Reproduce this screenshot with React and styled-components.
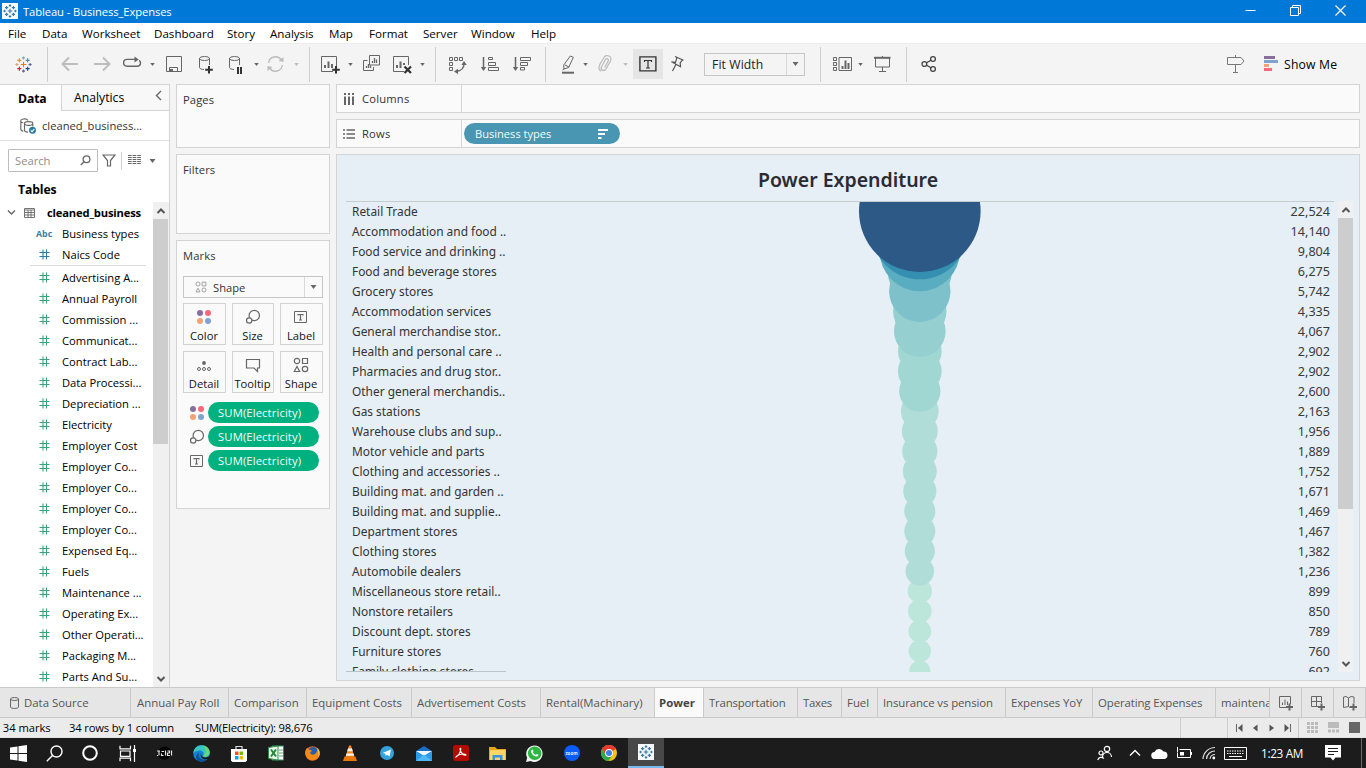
import React from "react";
import styled, { createGlobalStyle, css } from "styled-components";

const Global = createGlobalStyle`
  *, *::before, *::after { box-sizing: border-box; }
  html, body { margin: 0; padding: 0; }
  body {
    width: 1366px; height: 768px; overflow: hidden; background: #f4f4f4;
    font-family: "Open Sans", "Noto Sans", sans-serif; font-size: 11.2px; color: #000;
  }
  svg { display: block; flex: none; }
`;

const line = "#d4d4d4";

/* ---------- frame ---------- */
const Window = styled.div`
  width: 1366px; height: 768px; display: flex; flex-direction: column; overflow: hidden; white-space: nowrap;
`;
const TitleBar = styled.header`
  height: 23px; flex: none; background: #0078d7; color: #fff; display: flex; align-items: center; padding-left: 2px;
`;
const AppBadge = styled.span`
  width: 16px; height: 16px; background: #f7fafc; display: flex; align-items: center; justify-content: center; margin-top: -2px;
`;
const TitleText = styled.span`margin-left: 5px; font-size: 11.2px; letter-spacing: -0.08px;`;
const WindowButtons = styled.div`
  margin-left: auto; display: flex; align-items: center; padding-right: 20px; gap: 34px; margin-top: -3px;
`;
const MenuBar = styled.nav`
  height: 20px; flex: none; background: #fff; display: flex; align-items: center; padding: 1px 0 0 8px;
`;
const MenuItem = styled.span`
  flex: none; width: ${(p) => p.$w}px; font-size: 11.6px;
`;

/* ---------- toolbar ---------- */
const Toolbar = styled.div`
  height: 41px; flex: none; display: flex; align-items: center; border-top: 1px solid #ececec; background: #f4f4f4;
`;
const Slot = styled.span`display: flex; flex: none; margin-left: ${(p) => p.$l}px;`;
const Divider = styled.span`
  width: 1px; height: 35px; flex: none; background: #cfcfcf; margin-left: ${(p) => p.$l}px;
`;
const Toggled = styled.span`
  width: 30px; height: 30px; flex: none; margin-left: 5px; background: #e5e5e5; display: flex; align-items: center; justify-content: center;
`;
const FitSelect = styled.span`
  width: 101px; height: 23px; flex: none; margin-left: 17px; border: 1px solid #c6c6c6; display: flex; align-items: center;
  padding-left: 7px; font-size: 12.2px; color: #222; letter-spacing: 0.1px;
`;
const SelectArrow = styled.span`
  margin-left: auto; width: 18px; height: 100%; border-left: 1px solid #dadada; display: flex; align-items: center; justify-content: center;
`;
const ToolbarEnd = styled.div`margin-left: auto; padding-right: 28px; display: flex; align-items: center;`;
const ShowMe = styled.span`margin-left: 6px; font-size: 12.2px; width: 54px; letter-spacing: 0.2px;`;

/* ---------- work area ---------- */
const Work = styled.main`height: 603px; flex: none; display: flex;`;
const DataPane = styled.aside`
  width: 170px; flex: none; background: #fff; border-right: 1px solid ${line}; border-top: 1px solid ${line}; display: flex; flex-direction: column;
`;
const PaneTabs = styled.div`display: flex; height: 26px; flex: none;`;
const DataTab = styled.div`
  width: 61px; padding: 5px 0 0 18px; font-weight: 700; font-size: 12.2px; letter-spacing: -0.1px;
`;
const AnalyticsTab = styled.div`
  flex: 1; background: #f8f8f8; border-left: 1px solid ${line}; border-bottom: 1px solid ${line};
  padding: 5px 7px 0 12px; font-size: 12.2px; line-height: 16px; display: flex; justify-content: space-between;
  svg { margin-top: -1px; }
`;
const SourceRow = styled.div`
  height: 30px; flex: none; border-bottom: 1px solid #e0e0e0; display: flex; align-items: center; padding-left: 20px; gap: 6px; color: #333;
`;
const SearchRow = styled.div`display: flex; align-items: center; height: 23px; flex: none; margin: 8px 0 0 8px;`;
const SearchBox = styled.div`
  width: 90px; height: 23px; border: 1px solid #bdbdbd; border-radius: 1px; color: #8d8d8d; display: flex; align-items: center; justify-content: space-between;
  padding: 0 6px;
`;
const ThinRule = styled.i`width: 1px; height: 18px; background: #d0d0d0; margin: 0 6px 0 5px;`;
const TablesTitle = styled.div`
  height: 30px; flex: none; font-weight: 700; font-size: 12.2px; padding: 9px 0 0 18px; letter-spacing: -0.1px;
`;
const Tree = styled.div`flex: 1; min-height: 0; display: flex; justify-content: space-between;`;
const Fields = styled.div`width: 153px; overflow: hidden;`;
const TableRow = styled.div`
  height: 21px; display: flex; align-items: center; font-weight: 700; padding-left: 7px; font-size: 11.2px; letter-spacing: -0.17px;
  span { margin-left: 12px; }
  svg + svg { margin-left: 8px; }
`;
const FieldRow = styled.div`
  height: 21px; display: flex; align-items: center; font-size: 11.2px;
`;
const FieldKind = styled.span`
  width: 62px; padding-left: ${(p) => (p.$abc ? 36 : 38.5)}px; color: #3b7ea1; font-weight: 700; font-size: 8.8px;
`;
const FieldRule = styled.hr`height: 1px; border: 0; background: #dcdcdc; margin: 0 7px 1px 30px;`;

const Scroll = styled.div`
  width: ${(p) => p.$w || 16}px; background: #f0f0f0; display: flex; flex-direction: column; align-items: flex-start; flex: none;
`;
const ScrollEnd = styled.span`height: 17px; width: 15px; display: flex; align-items: center; justify-content: center;`;
const Thumb = styled.span`height: ${(p) => p.$h}px; width: 15px; background: #cdcdcd; margin-bottom: auto;`;

/* ---------- cards ---------- */
const Cards = styled.section`width: 154px; margin-left: 6px; flex: none; display: flex; flex-direction: column; gap: 6px;`;
const Card = styled.div`
  height: ${(p) => p.$h}px; border: 1px solid ${line}; background: #fafafa; padding: 7px 6px; color: #333; font-size: 11.2px; letter-spacing: 0.1px;
`;
const MarkType = styled.div`
  height: 22px; width: 140px; margin: 13px 0 5px; border: 1px solid #c6c6c6; display: flex; align-items: center; padding-left: 11px; letter-spacing: 0;
  svg + span { margin-left: 6px; }
`;
const MarkGrid = styled.div`display: grid; grid-template-columns: 43px 42px 43px; column-gap: 6px; row-gap: 6px;`;
const MarkButton = styled.div`
  height: 42px; border: 1px solid #d2d2d2; display: flex; flex-direction: column; align-items: center; color: #111;
  padding: 3px 1px 0 0; line-height: 16px; letter-spacing: 0;
  svg { margin-bottom: 1px; }
`;
const Pills = styled.div`margin-top: 9px; display: grid; row-gap: 3px;`;
const PillRow = styled.div`display: flex; align-items: center; padding-left: 6px; gap: 3px;`;
const Pill = styled.span`
  height: 21px; border-radius: 11px; display: flex; align-items: center; color: #f3fbf8;
  ${(p) => p.$blue
    ? css`background: #4996b2; width: 156px; justify-content: space-between; padding: 0 12px 0 11px; font-size: 11.1px;`
    : css`background: #00b180; width: 111px; padding: 0 10px; font-size: 11.3px;`}
`;

/* ---------- shelves and view ---------- */
const Canvas = styled.section`width: 1024px; margin-left: 6px; flex: none; display: flex; flex-direction: column; gap: 6px;`;
const Shelf = styled.div`height: 29px; flex: none; border: 1px solid ${line}; background: #fafafa; display: flex;`;
const ShelfName = styled.div`
  width: 125px; border-right: 1px solid ${line}; display: flex; align-items: center; padding-left: 6px; gap: 7px; color: #333; letter-spacing: 0.2px;
`;
const ShelfBody = styled.div`flex: 1; padding: 3px 2px;`;
const View = styled.div`
  height: 527px; border: 1px solid ${line}; background: #e6eff5; padding: 0 6px 0 9px; font-family: "Noto Sans", sans-serif;
`;
const ViewTitle = styled.h1`
  margin: 0 3px 0 0; height: 46px; line-height: 49px; text-align: center; font-size: 19.5px; font-weight: 600; color: #2b2b33;
`;
const ViewBody = styled.div`display: flex; height: 471px; justify-content: space-between;`;
const Table = styled.div`width: 988px; border-top: 1px solid #c5cccd; display: flex; overflow: hidden;`;
const Labels = styled.div`width: 160px; overflow: hidden; border-bottom: 1px solid #b9c4c9; padding-left: 6px;`;
const Label = styled.div`height: 20px; line-height: 19px; font-size: 11.9px; color: #333;`;
const Values = styled.div`width: 80px; overflow: hidden; padding-right: 4px; text-align: right;`;
const Value = styled(Label)`font-size: 12.6px; color: #3a3a3a;`;

/* ---------- bottom bars ---------- */
const SheetTabs = styled.nav`
  height: 31px; flex: none; border-top: 1px solid #cacaca; border-bottom: 1px solid #cacaca; background: #e6e6e6; display: flex;
`;
const Sheet = styled.div`
  width: ${(p) => p.$w}px; flex: none; border-right: 1px solid #cacaca; padding-left: ${(p) => p.$pl || 5}px; display: flex; align-items: center; overflow: hidden;
  color: #555; font-size: 11.4px; letter-spacing: ${(p) => p.$ls || 0}px;
  ${(p) => p.$on && css`background: #fafafa; font-weight: 700; color: #444;`}
  svg + span { margin-left: 5px; }
`;
const StatusBar = styled.footer`height: 20px; flex: none; background: #ebebeb; display: flex; align-items: center; border-bottom: 1px solid #e4e4e4;`;
const StatusText = styled.span`width: ${(p) => p.$w}px; flex: none; letter-spacing: ${(p) => p.$ls || 0}px;`;
const StatusBox = styled.span`
  height: 20px; width: ${(p) => p.$w}px; flex: none; border-left: 1px solid #cacaca; display: flex; align-items: center; gap: ${(p) => p.$gap || 0}px; padding-left: 8px;
`;
const Taskbar = styled.footer`height: 30px; flex: none; background: #1c1c1c; display: flex; align-items: center; color: #fff;`;
const TaskSlot = styled.span`
  width: ${(p) => p.$w || 37}px; height: 30px; flex: none; display: flex; align-items: center; justify-content: center;
  ${(p) => p.$on && css`background: #484848; border-bottom: 2px solid #76b9ed; padding-top: 2px; margin-left: 1px;`}
`;
const Tray = styled.div`margin-left: auto; display: flex; align-items: center; height: 30px;`;
const Clock = styled.span`font-size: 11.8px; letter-spacing: -0.35px; width: 44px; margin-left: 14px;`;
const PeekLine = styled.i`width: 1px; height: 30px; background: #6b6b6b; margin: 0 4px 0 20px;`;

/* ---------- glyphs ---------- */
const Svg = ({ w = 20, h = 20, c = "#666", sw = 1, children, ...rest }) => (
  <svg width={w} height={h} viewBox={`0 0 ${w} ${h}`} fill="none" stroke={c} strokeWidth={sw} {...rest}>{children}</svg>
);
const Caret = ({ c = "#666", w = 6, h = 4 }) => (
  <svg width={w} height={h} viewBox="0 0 6 4"><path d="M0 0h6L3 4z" fill={c} /></svg>
);
const CaretSlot = ({ l, c }) => <Slot $l={l}><Caret c={c} w={5} h={3} /></Slot>;

const plus = (x, y, r) => `M${x - r} ${y}h${2 * r}M${x} ${y - r}v${2 * r}`;
const TableauMark = ({ size = 18, mono }) => {
  const k = (c) => mono || c;
  return (
    <svg width={size} height={size} viewBox="0 0 18 18" fill="none" strokeWidth={mono ? 1.5 : 1.2}>
      <path d={plus(9, 9, 3)} stroke={k("#e8762b")} />
      <path d={plus(4.6, 4.6, 2.1)} stroke={k("#eb912c")} />
      <path d={plus(13.4, 4.6, 2.1)} stroke={k("#59879b")} />
      <path d={plus(4.6, 13.4, 2.1)} stroke={k("#c72035")} />
      <path d={plus(13.4, 13.4, 2.1)} stroke={k("#1f457e")} />
      <path d={plus(9, 2, 1.6)} stroke={k("#7ba6b5")} />
      <path d={plus(9, 16, 1.6)} stroke={k("#5c6692")} />
      <path d={plus(2, 9, 1.6)} stroke={k("#e8a06b")} />
      <path d={plus(16, 9, 1.6)} stroke={k("#5b6591")} />
    </svg>
  );
};

const Cylinder = () => <path d="M3.5 4v9.5c0 1 2 2 4.5 2M13.5 4v7M3.5 4.5a5 2 0 0 1 10 0a5 2 0 0 1-10 0" />;
const icons = {
  back: <Svg c="#bdbdbd" sw="2"><path d="M18 10H3M9 3.5L2.5 10L9 16.5" /></Svg>,
  forward: <Svg c="#bdbdbd" sw="2"><path d="M2 10h15M11 3.5l6.5 6.5l-6.5 6.5" /></Svg>,
  replay: <Svg sw="1.4"><path d="M17.3 6.2c2.2 2 1.3 6-2 6H5a3.4 3.4 0 0 1 0-6.8h9" /><path d="M12.5 2.6l4.3 2.9l-4.3 2.9z" fill="#666" stroke="none" /></Svg>,
  save: <Svg><path d="M2.5 2.5h15v15h-15zM5.5 17.5v-4h8v4" /><path d="M6 15h3v3H6z" fill="#666" stroke="none" /></Svg>,
  dbAdd: <Svg><Cylinder /><path d="M13 12v7.5M9.2 15.8h7.6" stroke="#333" strokeWidth="2" /></Svg>,
  dbPause: <Svg><Cylinder /><path d="M12 13v7M15 13v7" stroke="#333" strokeWidth="2" /></Svg>,
  refresh: <Svg c="#bdbdbd" sw="1.4"><path d="M2.6 9a7 7 0 0 1 12.8-3M16.4 11a7 7 0 0 1-12.8 3" /><path d="M17.5 3v5l-5-1zM1.5 17v-5l5 1z" fill="#bdbdbd" stroke="none" /></Svg>,
  sheetAdd: <Svg><path d="M13 17.5H1.5v-15h15V12" /><path d="M5 14v-3M8.500 14V7.500M12 14v-4" strokeWidth="2" /><path d="M16 12v7.500M12.200 15.800h7.600" stroke="#333" strokeWidth="2" /></Svg>,
  duplicate: <Svg><path d="M8.500 1.500h10v9.500h-10zM6.500 6.500h-4v10h10V13" /><path d="M11.500 9V7M13.500 9V4M15.500 9V5.500M5.500 14v-2M7.500 14v-4M9.500 14v-2.500" strokeWidth="1.300" /></Svg>,
  clear: <Svg><path d="M12 17.5H1.500v-15h15V11" /><path d="M5 14v-3M8.500 14V7.500M12 11V9" strokeWidth="2" /><path d="M12.500 12.500l6.500 6.500M19 12.500l-6.500 6.500" stroke="#333" strokeWidth="2.200" /></Svg>,
  swap: <Svg><path d="M2.500 3.500h3v3h-3zM7.500 3.500h3v3h-3zM12.500 3.500h3v3h-3zM2.500 8.500h3v3h-3zM2.500 13.500h3v3h-3z" /><path d="M17 9.500c.2 4-2.500 7.500-8 8" strokeWidth="1.400" /><path d="M17 7l2.800 4h-5.400zM7 17.500l4-2.800v5.400z" fill="#666" stroke="none" /></Svg>,
  asc: <Svg><path d="M3.500 3v12" strokeWidth="1.500" /><path d="M.8 13h5.400l-2.700 4z" fill="#666" stroke="none" /><path d="M8.500 3.500h4v2h-4zM8.500 8.500h7v3h-7zM8.500 13.500h10v3h-10z" /></Svg>,
  desc: <Svg><path d="M3.500 3v12" strokeWidth="1.500" /><path d="M.8 13h5.400l-2.700 4z" fill="#666" stroke="none" /><path d="M8.500 3.500h10v3h-10zM8.500 8.500h7v3h-7zM8.500 13.500h4v2.500h-4z" /></Svg>,
  highlight: <Svg><path d="M4 18.700h12" strokeWidth="2" /><path d="M12.300 2l3 1.300l-4.600 10.200l-4.700 1.500l-.3-4zM7 11l4 2M6 15l-1.500 1" /></Svg>,
  clip: <Svg c="#bdbdbd" sw="1.300"><path d="M5 10l4-6.500a3.500 3.500 0 0 1 6.500 3.500l-4.500 8a2.500 2.500 0 0 1-4.500-2.200l4-7.300a1.500 1.500 0 0 1 2.700 1.500l-3.500 6.500M5 10c-2 4-.6 7 1.500 6.800" /></Svg>,
  label: <Svg w={18} h={16} c="#333"><path d="M.9.900h16v14h-16z" strokeWidth="1.400" /><path d="M5.500 6V4.500h7V6M9 4.500v7.500M7 12h4" strokeWidth="1.200" /></Svg>,
  pin: <Svg c="#555"><path d="M8 2.500l8.500 3.700M10 3.400l-1.500 5l-4-.6l9 5l-.3-3.900l2.600-3.500M8.800 10.800L5.500 17" strokeWidth="1.200" /></Svg>,
  cards: <Svg><path d="M1.500 3.500h3v3h-3zM1.500 8.500h3v3h-3zM1.500 13.500h3v3h-3zM7 3.500h12.500v13H7z" /><path d="M10.500 15v-3M13.500 15V6.500M16.500 15V9" strokeWidth="2" /></Svg>,
  present: <Svg><path d="M2 3.800h16.500" strokeWidth="2" /><path d="M3.500 4v9h14V4M10.500 2v2M10.500 13v4.500M7 17.500h7" /></Svg>,
  share: <Svg c="#444" sw="1.300"><circle cx="3.400" cy="10" r="2.400" /><circle cx="12" cy="5" r="2.400" /><circle cx="12" cy="15" r="2.400" /><path d="M5.500 8.800l4.500-2.600M5.500 11.200l4.500 2.600" /></Svg>,
  signpost: <Svg c="#777"><path d="M1.500 3.500h13.500l3 3.500l-3 3.500H1.500zM9.500 1v2.500M9.500 10.500v8M7 18.500h5" /></Svg>,
};
const ShowMeBars = () => (
  <svg width="14" height="16" viewBox="0 0 14 16">
    <path d="M0 0h11v3H0z" fill="#8a6f9e" /><path d="M0 4h14v3H0z" fill="#7fa3ce" /><path d="M0 8h5v3H0z" fill="#f3a273" /><path d="M0 12h8v3H0z" fill="#f9677c" />
  </svg>
);

const Hash = ({ c }) => <Svg w={11} h={11} c={c} sw="1.100"><path d="M4 .5v10M7.500 .5v10M.5 3.500h10M.5 7.500h10" /></Svg>;
const ScrollUp = () => <Svg w={10} h={8} c="#555" sw="2"><path d="M1.500 6L5 2.500L8.500 6" /></Svg>;
const ScrollDown = () => <Svg w={10} h={8} c="#555" sw="2"><path d="M1.500 2L5 5.500L8.500 2" /></Svg>;

const ColorDots = ({ s = 16 }) => (
  <svg width={s} height={s} viewBox="0 0 16 16">
    <circle cx="4" cy="4" r="3" fill="#8a6f9e" /><circle cx="12" cy="4" r="3" fill="#f9677c" />
    <circle cx="4" cy="12" r="3" fill="#f3a273" /><circle cx="12" cy="12" r="3" fill="#7fa3ce" />
  </svg>
);
const SizeIcon = () => <Svg w={16} h={16} sw="1.200"><circle cx="9.300" cy="6.500" r="5.200" /><circle cx="4.200" cy="11.500" r="2.700" fill="#fafafa" /></Svg>;
const TextIcon = () => <Svg w={14} h={12}><path d="M.5.500h12v11H.500z" /><path d="M4 4.500v-1h5v1M6.500 3.500v5.500M5 9h3" strokeWidth="1.200" /></Svg>;
const DetailIcon = () => <Svg w={16} h={16}><circle cx="8" cy="5" r="1.900" fill="#666" stroke="none" /><circle cx="3" cy="11" r="1.500" /><circle cx="8" cy="11" r="1.500" /><circle cx="13" cy="11" r="1.500" /></Svg>;
const TooltipIcon = () => <Svg w={16} h={16} sw="1.200"><path d="M1.500 2.500h13v8.500h-2v3.500l-3.500-3.500H1.500z" /></Svg>;
const ShapeIcon = ({ c = "#666", s = 16 }) => (
  <svg width={s} height={s} viewBox="0 0 16 16" fill="none" stroke={c} strokeWidth="1.200">
    <circle cx="4" cy="4" r="2.700" /><path d="M9.500 1.500h5v5h-5zM4 9.500l2.700 5H1.300z" /><circle cx="12" cy="12" r="2.700" />
  </svg>
);

/* ---------- data ---------- */
const menus = [["File", 34], ["Data", 40], ["Worksheet", 72], ["Dashboard", 73], ["Story", 43], ["Analysis", 59], ["Map", 40], ["Format", 54], ["Server", 48], ["Window", 60], ["Help", 40]];

const measures = ["Advertising A...", "Annual Payroll", "Commission ...", "Communicat...", "Contract Lab...", "Data Processi...", "Depreciation ...", "Electricity", "Employer Cost", "Employer Co...", "Employer Co...", "Employer Co...", "Employer Co...", "Expensed Eq...", "Fuels", "Maintenance ...", "Operating Ex...", "Other Operati...", "Packaging M...", "Parts And Su..."];

const rows = [
  ["Retail Trade", 22524, "#2c5985"], ["Accommodation and food ..", 14140, "#348fb1"], ["Food service and drinking ..", 9804, "#5aacc1"],
  ["Food and beverage stores", 6275, "#7ec1cb"], ["Grocery stores", 5742, "#7fc1cb"], ["Accommodation services", 4335, "#95cfd0"],
  ["General merchandise stor..", 4067, "#95cfd0"], ["Health and personal care ..", 2902, "#a1d7d3"], ["Pharmacies and drug stor..", 2902, "#a1d7d3"],
  ["Other general merchandis..", 2600, "#a1d7d3"], ["Gas stations", 2163, "#b0ddd8"], ["Warehouse clubs and sup..", 1956, "#b0ddd8"],
  ["Motor vehicle and parts", 1889, "#b0ddd8"], ["Clothing and accessories ..", 1752, "#b0ddd8"], ["Building mat. and garden ..", 1671, "#b0ddd8"],
  ["Building mat. and supplie..", 1469, "#b0ddd8"], ["Department stores", 1467, "#b0ddd8"], ["Clothing stores", 1382, "#b0ddd8"],
  ["Automobile dealers", 1236, "#b0ddd8"], ["Miscellaneous store retail..", 899, "#bde6db"], ["Nonstore retailers", 850, "#bde6db"],
  ["Discount dept. stores", 789, "#bde6db"], ["Furniture stores", 760, "#bde6db"], ["Family clothing stores", 692, "#bde6db"],
];

const sheets = [
  ["Annual Pay Roll", 98, 6, 0.04], ["Comparison", 78, 5], ["Equipment Costs", 105, 5], ["Advertisement Costs", 129, 5, -0.03], ["Rental(Machinary)", 114, 5, 0.04],
  ["Power", 49, 4], ["Transportation", 94, 5, -0.2], ["Taxes", 44, 5, -0.3], ["Fuel", 36, 5], ["Insurance vs pension", 128, 5, -0.1], ["Expenses YoY", 87, 5, -0.1],
  ["Operating Expenses", 123, 5, -0.1], ["maintenance", 54, 5],
];

/* ---------- chart ---------- */
const Bubbles = () => (
  <svg width="748" height="470" viewBox="0 0 748 470">
    {rows.map(([name, v, fill], i) => (
      <circle key={name} cx="413.8" cy={9.2 + i * 20} r={60.8 * Math.sqrt(v / 22524)} fill={fill} />
    )).reverse()}
  </svg>
);

/* ---------- taskbar logos ---------- */
const Win = () => <svg width="17" height="17" viewBox="0 0 17 17" fill="#fff"><path d="M0 2.500L7.500 1.400V8H0zM8.500 1.200L17 0v8H8.500zM0 9h7.500v6.600L0 14.500zM8.500 9H17v8l-8.500-1.200z" /></svg>;
const Find = () => <Svg w={17} h={17} c="#fff" sw="1.400"><circle cx="10.500" cy="6.500" r="5.500" /><path d="M6.500 10.500L.8 16.200" /></Svg>;
const Ring = () => <Svg w={16} h={16} c="#fff" sw="2"><circle cx="8" cy="8" r="6.800" /></Svg>;
const TaskView = () => <Svg w={17} h={17} c="#fff" sw="1.200"><path d="M1 .8v3h10.500v-3M1 16.200v-3h10.500v3M1.500 6h9.500v5.300H1.500zM15.500 0v17" /><path d="M14 4h3v3h-3z" fill="#fff" stroke="none" /></Svg>;
const Scribble = () => (
  <Svg w={17} h={14} c="#e4e4e4" sw="1.200">
    <circle cx="8.500" cy="7" r="6" stroke="#000" fill="#000" />
    <path d="M1 5h3M3 5v4.500M1 9.500h1M5.500 5.500h2.500M5.500 7.500v2h2M9.500 4.500v5M11.500 5h2v2h-2v2.500h2.500M15.500 4.500v5" />
  </Svg>
);
const Edge = () => (
  <svg width="17" height="17" viewBox="0 0 17 17">
    <circle cx="8.500" cy="8.500" r="8.300" fill="#1482d2" />
    <path d="M.3 8.500C.5 3.500 4 .2 8.500.2c5 0 8.200 3.500 8.200 7 0 3-2.500 4.600-4.500 4.600-2.500 0-2-1.300-1.600-2C11.500 7.500 9 5.300 6 5.500 2.500 5.700.8 7.500.3 8.500z" fill="#37c6c0" />
    <path d="M10 .4c4.300.7 6.700 4 6.700 6.800 0 3-2.500 4.600-4.500 4.600-2 0-2.200-.8-1.800-1.600 3-1 3-6.500-.4-9.800z" fill="#66d773" />
    <path d="M5.600 9.500c0 3.800 3.500 6.300 8.500 4.700-2 2.300-5.500 3.300-8.700 1.800C2 14.300 2.500 9 6.500 7.500c-.6.600-.9 1.200-.9 2z" fill="#0c4f94" />
    <path d="M8 8.500c-.3 2.200 1.500 4 4.200 4 1.800 0 3.300-.6 4.300-1.500l.5 2-2.900 1.200C10.500 15 6.500 12.500 8 8.500z" fill="#1c1c1c" />
  </svg>
);
const Store = () => (
  <svg width="16" height="17" viewBox="0 0 16 17"><path d="M5 4V1.500h6V4" fill="none" stroke="#ddd" strokeWidth="1.200" /><path d="M0 4h16v11.500L14.500 17h-13L0 15.500z" fill="#fff" />
    <path d="M4 6.500h3.500V10H4z" fill="#f25022" /><path d="M8.500 6.500H12V10H8.500z" fill="#7fba00" /><path d="M4 11h3.500v3.500H4z" fill="#00a4ef" /><path d="M8.500 11H12v3.500H8.500z" fill="#ffb900" /></svg>
);
const Excel = () => (
  <svg width="16" height="16" viewBox="0 0 16 16"><path d="M4 1h11.500v14H4z" fill="#fff" stroke="#2f8f4a" /><path d="M11 5h4M11 8h4M11 11h4" stroke="#58a968" />
    <path d="M.5 2.500L10 1v14L.5 13.500z" fill="#e9f5e9" stroke="#2f8f4a" /><path d="M3 4.500l5 7M8 4.500l-5 7" stroke="#23863c" strokeWidth="2" /></svg>
);
const Firefox = () => (
  <svg width="15" height="15" viewBox="0 0 15 15"><circle cx="7.500" cy="7.500" r="7.300" fill="#e86a18" /><circle cx="8" cy="6" r="5" fill="#2a5fa8" />
    <path d="M.5 5C1 3 2 2 2.500 1.800c0 1 .5 1.700 1.500 2 1.500-.3 2.500.5 3 1.500-1.500.2-2 1-1.500 2.200.8 1.500 3 1.500 4.500.5C12 7 13 4 11.500 1.500c3 1.500 4 5.500 2.500 9-2 4-8 5-11 2C.5 10.500 0 7.500.5 5z" fill="#f48a1c" /><path d="M12 2c3 2.500 3.300 6.500 1 9.500 1-3 .5-6.500-1-9.500z" fill="#ffcf3a" /></svg>
);
const Vlc = () => (
  <svg width="14" height="16" viewBox="0 0 14 16"><path d="M6 .5h2l3.500 11.500h-9z" fill="#f58a1f" /><path d="M5 3.500h4l.8 2.800H4.200zM3.500 8.500h7l.7 2.300H2.800z" fill="#f4f4f4" /><path d="M1.500 11.500h11L14 16H0z" fill="#e8770e" /></svg>
);
const Telegram = () => <svg width="14" height="14" viewBox="0 0 14 14"><circle cx="7" cy="7" r="7" fill="#34a3dc" /><path d="M2.500 7l8.500-3.500-1.500 7-2.500-1.800L5.500 10V7.800z" fill="#fff" /></svg>;
const Mail = () => <svg width="16" height="15" viewBox="0 0 16 15"><path d="M0 5l8-5 8 5v10H0z" fill="#1a6fc4" /><path d="M0 5h16l-8 5z" fill="#f1f8fd" /><path d="M0 5.500l8 4.500 8-4.500V15H0z" fill="#2b9bea" /><path d="M0 15l8-6.500L16 15z" fill="#50b7f5" /></svg>;
const Acrobat = () => <svg width="16" height="16" viewBox="0 0 16 16"><rect width="16" height="16" rx="2.500" fill="#b30b00" /><path d="M3 12c2-.5 5-5.500 4.800-8.500-.6-1-1.300.5 0 3 1.200 2.500 3.500 4 5 3.700.8-.7-1.500-1.400-4-1C6.500 9.500 3.500 11 3 12z" fill="none" stroke="#fff" strokeWidth="1.100" /></svg>;
const Explorer = () => <svg width="17" height="15" viewBox="0 0 17 15"><path d="M0 1h6l2 2h9v11H0z" fill="#e8a317" /><path d="M1 4h15.500v10H1z" fill="#fcd667" /><path d="M3.500 14V9h10v5H11v-2.500H6V14z" fill="#3a93dd" /></svg>;
const WhatsApp = () => <svg width="17" height="17" viewBox="0 0 17 17"><path d="M0 17l1.200-4.300A8.200 8.200 0 1 1 4.600 16z" fill="#f4f4f4" /><circle cx="8.700" cy="8.300" r="6.800" fill="#2cb742" /><path d="M5.500 5c.8-1 1.300-.6 2 .8 0 .8-.8.900-.6 1.400.8 1.400 1.600 2.100 2.800 2.600.5 0 .8-1 1.300-.9 1.500.7 1.700.9 1.200 1.700-1.200 1.500-3 .9-4.500-.1C5.500 9 4.400 6.800 5.500 5z" fill="#fff" /></svg>;
const ZoomDisc = styled.span`
  width: 16px; height: 16px; border-radius: 50%; background: #0b5cff; color: #dfe9ff; font: 700 4.5px "Open Sans", sans-serif; display: flex; align-items: center; justify-content: center;
`;
const Chrome = () => (
  <svg width="16" height="16" viewBox="0 0 16 16"><circle cx="8" cy="8" r="8" fill="#fbc116" /><path d="M8 8L1.100 4A8 8 0 0 1 14.900 4z" fill="#e33b2e" /><path d="M8 8V4h6.900A8 8 0 0 0 8 0 8 8 0 0 0 1.100 4L4.500 10z" fill="#e33b2e" />
    <path d="M1.100 4A8 8 0 0 0 7.500 16l4-6L4.500 10z" fill="#2da94f" /><circle cx="8" cy="8" r="3.900" fill="#fff" /><circle cx="8" cy="8" r="3" fill="#3f7ee8" /></svg>
);

export default function App() {
  return (
    <Window>
      <Global />
      <TitleBar>
        <AppBadge><TableauMark size={14} mono="#3a7ca5" /></AppBadge>
        <TitleText>Tableau - Business_Expenses</TitleText>
        <WindowButtons>
          <Svg w={11} h={11} c="#fff"><path d="M.5 5.500h10" /></Svg>
          <Svg w={11} h={11} c="#fff"><path d="M.5 2.500h8v8h-8zM2.500 2V.5h8v8H9" /></Svg>
          <Svg w={11} h={11} c="#fff" sw="1.200"><path d="M.5.5l10 10M10.500.5l-10 10" /></Svg>
        </WindowButtons>
      </TitleBar>
      <MenuBar>{menus.map(([t, w]) => <MenuItem key={t} $w={w}>{t}</MenuItem>)}</MenuBar>

      <Toolbar>
        <Slot $l={15}><TableauMark size={17} /></Slot>
        <Divider $l={15} />
        <Slot $l={12}>{icons.back}</Slot>
        <Slot $l={12}>{icons.forward}</Slot>
        <Slot $l={10}>{icons.replay}</Slot>
        <CaretSlot l={8} />
        <Slot $l={9}>{icons.save}</Slot>
        <Slot $l={12}>{icons.dbAdd}</Slot>
        <Slot $l={10}>{icons.dbPause}</Slot>
        <CaretSlot l={8} />
        <Slot $l={7}>{icons.refresh}</Slot>
        <CaretSlot l={8} c="#bdbdbd" />
        <Divider $l={10} />
        <Slot $l={10}>{icons.sheetAdd}</Slot>
        <CaretSlot l={8} />
        <Slot $l={8}>{icons.duplicate}</Slot>
        <Slot $l={11}>{icons.clear}</Slot>
        <CaretSlot l={8} />
        <Divider $l={10} />
        <Slot $l={11}>{icons.swap}</Slot>
        <Slot $l={13}>{icons.asc}</Slot>
        <Slot $l={12}>{icons.desc}</Slot>
        <Divider $l={13} />
        <Slot $l={12}>{icons.highlight}</Slot>
        <CaretSlot l={5} />
        <Slot $l={7}>{icons.clip}</Slot>
        <CaretSlot l={8} c="#bdbdbd" />
        <Toggled>{icons.label}</Toggled>
        <Slot $l={4}>{icons.pin}</Slot>
        <FitSelect>Fit Width<SelectArrow><Caret w={7} h={4} /></SelectArrow></FitSelect>
        <Divider $l={15} />
        <Slot $l={11}>{icons.cards}</Slot>
        <CaretSlot l={6} />
        <Slot $l={9}>{icons.present}</Slot>
        <Divider $l={14} />
        <Slot $l={14}>{icons.share}</Slot>
        <ToolbarEnd>
          <Slot $l={0}>{icons.signpost}</Slot>
          <Slot $l={18}><ShowMeBars /></Slot>
          <ShowMe>Show Me</ShowMe>
        </ToolbarEnd>
      </Toolbar>

      <Work>
        <DataPane>
          <PaneTabs>
            <DataTab>Data</DataTab>
            <AnalyticsTab>Analytics<Svg w={7} h={13} sw="1.400"><path d="M6 2L1.500 6.500L6 11" /></Svg></AnalyticsTab>
          </PaneTabs>
          <SourceRow>
            <Svg w={16} h={16} sw="1.100">
              <path d="M.8 3v8c0 1.200 1 2 2.500 2.300M.8 3a3.500 1.800 0 0 1 7-.5M.8 3c0 1 1 1.700 2.500 2" />
              <path d="M4.500 5.800v6.500c0 1 1.500 1.800 3.500 1.800M4.500 5.500a4 1.800 0 0 1 8.300 0a4 1.800 0 0 1-8.300 0M12.800 5.500v3" />
              <circle cx="12.500" cy="12.300" r="3.500" fill="#2f7ba0" stroke="none" /><path d="M10.800 12.300l1.300 1.300l2.200-2.500" stroke="#fff" />
            </Svg>
            cleaned_business...
          </SourceRow>
          <SearchRow>
            <SearchBox>Search<Svg w={11} h={11} sw="1.300"><circle cx="6.500" cy="4.200" r="3.400" /><path d="M4 6.700L.8 10" /></Svg></SearchBox>
            <Slot $l={4}><Svg w={14} h={13} sw="1.200"><path d="M1 1h12L8.500 6.500v5.500h-3V6.500z" /></Svg></Slot>
            <ThinRule />
            <Svg w={13} h={11}><path d="M0 .5h13M0 2.500h13M0 4.500h13M0 6.500h13M0 8.500h13" strokeDasharray="3.700 .9" /></Svg>
            <Slot $l={8}><Caret w={7} h={4} /></Slot>
          </SearchRow>
          <TablesTitle>Tables</TablesTitle>
          <Tree>
            <Fields>
              <TableRow>
                <Svg w={9} h={7} sw="1.400"><path d="M1 1.500L4.500 5L8 1.500" /></Svg>
                <Svg w={11} h={10}><path d="M.5.500h10v9H.500zM.5 2h10M.5 4.500h10M.5 7h10M4 2v8M7 2v8" strokeWidth=".9" /></Svg>
                <span>cleaned_business</span>
              </TableRow>
              <FieldRow><FieldKind $abc>Abc</FieldKind>Business types</FieldRow>
              <FieldRow><FieldKind><Hash c="#2f7ba6" /></FieldKind>Naics Code</FieldRow>
              <FieldRule />
              {measures.map((m, i) => <FieldRow key={i}><FieldKind><Hash c="#3aa27c" /></FieldKind>{m}</FieldRow>)}
            </Fields>
            <Scroll><ScrollEnd><ScrollUp /></ScrollEnd><Thumb $h={225} /><ScrollEnd><ScrollDown /></ScrollEnd></Scroll>
          </Tree>
        </DataPane>

        <Cards>
          <Card $h={64}>Pages</Card>
          <Card $h={80}>Filters</Card>
          <Card $h={269}>
            Marks
            <MarkType>
              <ShapeIcon c="#999" s={12} /><span>Shape</span>
              <SelectArrow><Caret w={7} h={4} /></SelectArrow>
            </MarkType>
            <MarkGrid>
              <MarkButton><Svg stroke="none"><g transform="translate(2 2)"><ColorDots /></g></Svg>Color</MarkButton>
              <MarkButton><Svg><g transform="translate(2 2)"><SizeIcon /></g></Svg>Size</MarkButton>
              <MarkButton><Svg><g transform="translate(3 4)"><TextIcon /></g></Svg>Label</MarkButton>
              <MarkButton><Svg><g transform="translate(2 3)"><DetailIcon /></g></Svg>Detail</MarkButton>
              <MarkButton><Svg><g transform="translate(2 2)"><TooltipIcon /></g></Svg>Tooltip</MarkButton>
              <MarkButton><Svg><g transform="translate(2 2)"><ShapeIcon /></g></Svg>Shape</MarkButton>
            </MarkGrid>
            <Pills>
              <PillRow><ColorDots /><Pill>SUM(Electricity)</Pill></PillRow>
              <PillRow><SizeIcon /><Pill>SUM(Electricity)</Pill></PillRow>
              <PillRow><Svg w={16} h={12}><g transform="translate(1 0)"><TextIcon /></g></Svg><Pill>SUM(Electricity)</Pill></PillRow>
            </Pills>
          </Card>
        </Cards>

        <Canvas>
          <Shelf>
            <ShelfName><Svg w={12} h={12} sw="2"><path d="M2 0v2M6 0v2M10 0v2M2 3.500V12M6 3.500V12M10 3.500V12" /></Svg>Columns</ShelfName>
            <ShelfBody />
          </Shelf>
          <Shelf>
            <ShelfName><Svg w={12} h={12} sw="1.700"><path d="M0 2h2M0 6h2M0 10h2M3.500 2H12M3.500 6H12M3.500 10H12" /></Svg>Rows</ShelfName>
            <ShelfBody>
              <Pill $blue>Business types<Svg w={10} h={10} c="#fff" sw="2"><path d="M0 1h10M0 5h7M0 9h3.500" /></Svg></Pill>
            </ShelfBody>
          </Shelf>
          <View>
            <ViewTitle>Power Expenditure</ViewTitle>
            <ViewBody>
              <Table>
                <Labels>{rows.map(([n]) => <Label key={n}>{n}</Label>)}</Labels>
                <Bubbles />
                <Values>{rows.map(([n, v]) => <Value key={n}>{v.toLocaleString("en-US")}</Value>)}</Values>
              </Table>
              <Scroll $w={15}><ScrollEnd><ScrollUp /></ScrollEnd><Thumb $h={291} /><ScrollEnd><ScrollDown /></ScrollEnd></Scroll>
            </ViewBody>
          </View>
        </Canvas>
      </Work>

      <SheetTabs>
        <Sheet $w={131} $pl={10}>
          <Svg w={9} h={12}><path d="M.5 2v8a4 1.500 0 0 0 8 0V2a4 1.500 0 0 0-8 0a4 1.500 0 0 0 8 0" /></Svg><span>Data Source</span>
        </Sheet>
        {sheets.map(([t, w, pl, ls]) => <Sheet key={t} $w={w} $pl={pl} $ls={ls} $on={t === "Power"}>{t}</Sheet>)}
        <Sheet $w={32} $pl={8}><Svg w={16} h={16}><path d="M10 12.500H1.500v-11h11V9" /><path d="M4.500 10V7.500M7 10V4.500M9.500 10V6.500" /><path d="M11.500 8.500v7M8 12h7" strokeWidth="2" /></Svg></Sheet>
        <Sheet $w={32} $pl={8}><Svg w={16} h={16}><path d="M10 11.500H1.500v-10h10V8M6.500 1.500v10M1.500 6.500h10" /><path d="M11.500 8.500v7M8 12h7" strokeWidth="2" /></Svg></Sheet>
        <Sheet $w={32} $pl={8}><Svg w={16} h={16}><path d="M8 12.500L6.500 11.500L1.500 12.500V2l2.500-.5L6.500 3l2.500-1.500l3 .5V8M6.500 3v8.500" /><path d="M11.500 8.500v7M8 12h7" strokeWidth="2" /></Svg></Sheet>
      </SheetTabs>

      <StatusBar>
        <StatusText $w={69} $ls={-0.05}>&nbsp;34 marks</StatusText>
        <StatusText $w={126} $ls={-0.14}>34 rows by 1 column</StatusText>
        <StatusText $w={985} $ls={-0.17}>SUM(Electricity): 98,676</StatusText>
        <StatusBox $w={47} />
        <StatusBox $w={71} $gap={9}>
          <Svg w={7} h={8}><path d="M.5 0v8" /><path d="M6.500 0v8L2 4z" fill="#555" stroke="none" /></Svg>
          <Svg w={7} h={8}><path d="M5.500 .5v7L1 4z" fill="#555" stroke="none" /></Svg>
          <Svg w={7} h={8}><path d="M1.500 .5v7L6 4z" fill="#555" stroke="none" /></Svg>
          <Svg w={7} h={8}><path d="M6.500 0v8" /><path d="M.5 0v8L5 4z" fill="#555" stroke="none" /></Svg>
        </StatusBox>
        <StatusBox $w={68} $gap={10}>
          <Svg w={11} h={11} c="#bbb" sw="3"><path d="M0 1.500h11M0 5.500h11M0 9.500h11" strokeDasharray="3 1" /></Svg>
          <Svg w={11} h={11} c="#bbb" sw="3"><path d="M0 3h11" strokeWidth="6" /><path d="M0 9h11" strokeDasharray="3 1" /></Svg>
          <Svg w={11} h={11} stroke="none"><path d="M0 0h11v11H0z" fill="#666" /></Svg>
        </StatusBox>
      </StatusBar>

      <Taskbar>
        <TaskSlot $w={36}><Win /></TaskSlot>
        <TaskSlot $w={36}><Find /></TaskSlot>
        <TaskSlot $w={36}><Ring /></TaskSlot>
        <TaskSlot $w={38}><TaskView /></TaskSlot>
        <TaskSlot><Scribble /></TaskSlot>
        <TaskSlot><Edge /></TaskSlot>
        <TaskSlot><Store /></TaskSlot>
        <TaskSlot><Excel /></TaskSlot>
        <TaskSlot><Firefox /></TaskSlot>
        <TaskSlot><Vlc /></TaskSlot>
        <TaskSlot><Telegram /></TaskSlot>
        <TaskSlot><Mail /></TaskSlot>
        <TaskSlot><Acrobat /></TaskSlot>
        <TaskSlot><Explorer /></TaskSlot>
        <TaskSlot><WhatsApp /></TaskSlot>
        <TaskSlot><ZoomDisc>zoom</ZoomDisc></TaskSlot>
        <TaskSlot><Chrome /></TaskSlot>
        <TaskSlot $w={36} $on><AppBadge><TableauMark size={14} mono="#3a7ca5" /></AppBadge></TaskSlot>
        <Tray>
          <Svg w={16} h={16} c="#fff" sw="1.200"><circle cx="10" cy="4" r="2.700" /><path d="M5.500 12a4.500 4.500 0 0 1 9 0" /><circle cx="4" cy="8" r="2" /><path d="M.8 15a3.500 3.500 0 0 1 6 -1.500" /></Svg>
          <Slot $l={16}><Svg w={12} h={8} c="#fff" sw="1.400"><path d="M1 6.500L6 1.500L11 6.500" /></Svg></Slot>
          <Slot $l={10}><svg width="17" height="11" viewBox="0 0 17 11"><path d="M4 11a3.500 3.500 0 0 1-.5-7A5 5 0 0 1 12.500 3.500A3.800 3.800 0 0 1 13.500 11z" fill="#fff" /></svg></Slot>
          <Slot $l={8}><Svg w={17} h={12} c="#fff"><path d="M3.500 2.500h11v8h-13v-5M15.500 5v3" /><path d="M4 5h4v3.500H4z" fill="#fff" stroke="none" /><path d="M1.500 0v5" /></Svg></Slot>
          <Slot $l={9}><Svg w={14} h={14} c="#ddd" sw="1.200"><path d="M1 13A12 12 0 0 1 13 1.500M4.500 13A8.500 8.500 0 0 1 13 5M8 13A5 5 0 0 1 13 8.500" /><circle cx="11.800" cy="12" r="1.400" fill="#fff" stroke="none" /></Svg></Slot>
          <Slot $l={8}><Svg w={23} h={13} c="#fff"><path d="M.5.500h22v12H.500z" /><path d="M3 4h17M3 6.500h17" strokeDasharray="1.500 1" /><path d="M5 9.500h13" /></Svg></Slot>
          <Clock>1:23 AM</Clock>
          <Slot $l={20}><svg width="16" height="16" viewBox="0 0 16 16"><path d="M0 0h16v12.500h-5.500L8 15.500L5.500 12.500H0z" fill="#fff" /><path d="M3 3.500h10M3 6.500h10M3 9.500h6" stroke="#1c1c1c" strokeWidth="1.100" /></svg></Slot>
          <PeekLine />
        </Tray>
      </Taskbar>
    </Window>
  );
}
